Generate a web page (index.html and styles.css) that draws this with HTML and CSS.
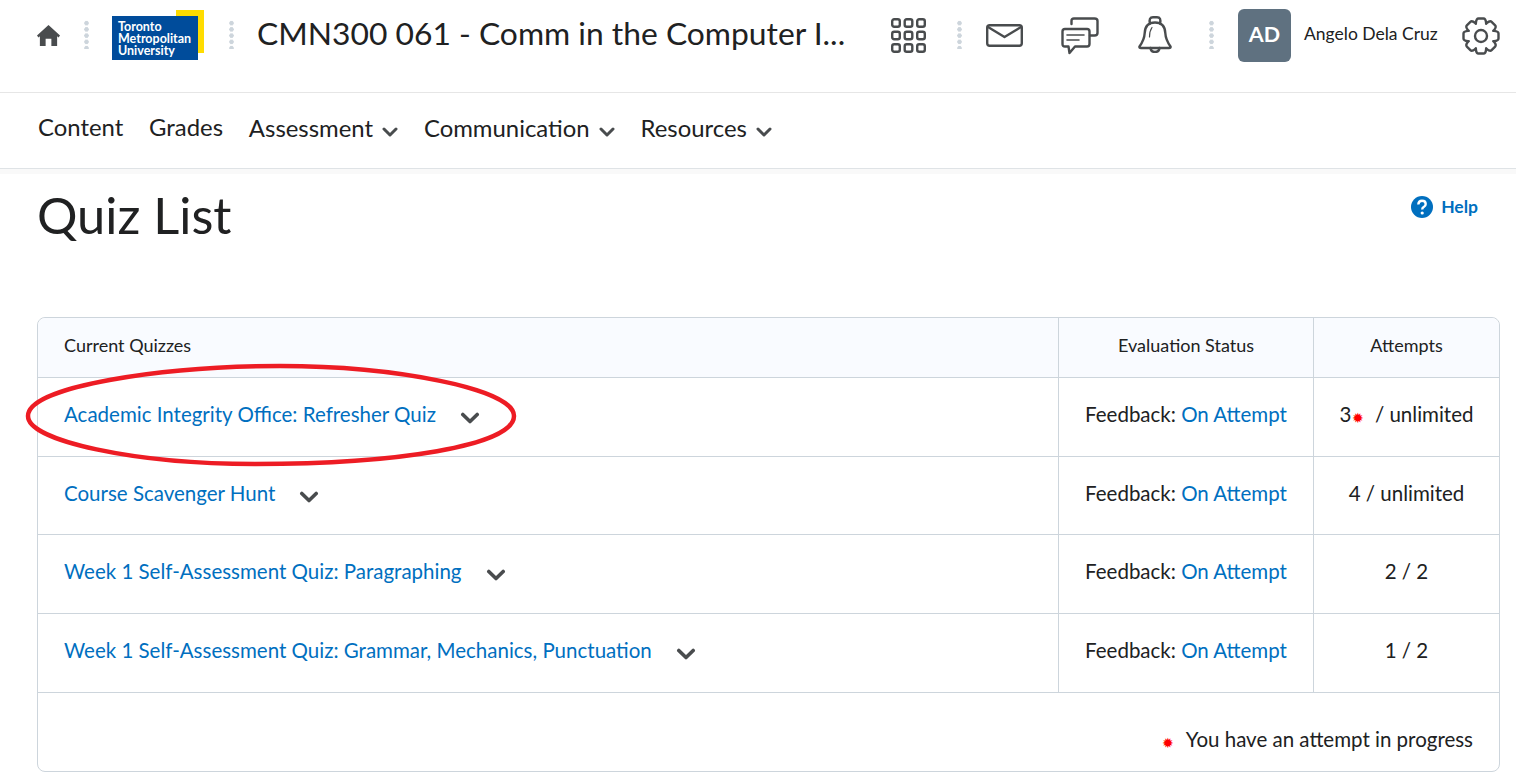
FILE: index.html
```html
<!DOCTYPE html>
<html lang="en">
<head>
    <meta charset="UTF-8">
    <title>Quiz List</title>
    <link rel="stylesheet" href="styles.css">
</head>
<body>
    <header class="topbar">
        <svg class="ico-home" viewBox="0 0 24 24"><path d="M12 1 L24 12 L22.500 14 L21 12.800 V23 H15 V15.500 H9 V23 H3 V12.800 L1.500 14 L0 12 Z" fill="#494c4e"/></svg>
        <span class="dots dots-a"></span>
        <div class="logo">
            <span class="logo-yellow"></span>
            <div class="logo-blue">Toronto<br>Metropolitan<br>University</div>
        </div>
        <span class="dots dots-b"></span>
        <div class="course">CMN300 061 - Comm in the Computer I...</div>
        <svg class="ico-grid" viewBox="0 0 35 35" fill="none" stroke="#494c4e" stroke-width="2.4">
            <rect x="1.2" y="1.2" width="7.6" height="7.6" rx="2"/><rect x="13.7" y="1.2" width="7.6" height="7.6" rx="2"/><rect x="26.2" y="1.2" width="7.6" height="7.6" rx="2"/>
            <rect x="1.2" y="13.7" width="7.6" height="7.6" rx="2"/><rect x="13.7" y="13.7" width="7.6" height="7.6" rx="2"/><rect x="26.2" y="13.7" width="7.6" height="7.6" rx="2"/>
            <rect x="1.2" y="26.2" width="7.6" height="7.6" rx="2"/><rect x="13.7" y="26.2" width="7.6" height="7.6" rx="2"/><rect x="26.2" y="26.2" width="7.6" height="7.6" rx="2"/>
        </svg>
        <span class="dots dots-c"></span>
        <svg class="ico-mail" viewBox="0 0 37 23" fill="none" stroke="#494c4e" stroke-width="2.4" stroke-linejoin="round" stroke-linecap="round">
            <rect x="1.2" y="1.2" width="34.6" height="20.6" rx="2.5"/><path d="M2 3 L18.5 13 L35 3"/>
        </svg>
        <svg class="ico-chat" viewBox="0 0 38 38" fill="none" stroke="#494c4e" stroke-width="2.4" stroke-linejoin="round" stroke-linecap="round">
            <path d="M10.5 7 V4 Q10.500 1.500 13 1.500 H33.500 Q36.500 1.500 36.500 4 V16 Q36.500 18.500 33.500 18.500 H29"/>
            <path d="M4 12 H26 Q28.500 12 28.500 14.500 V27 Q28.500 29.500 26 29.500 H14 L8.500 36 L7.500 29.500 H4 Q1.500 29.500 1.500 27 V14.500 Q1.500 12 4 12 Z"/>
            <path d="M6 18 H23 M6 23 H18" stroke-width="1.600"/>
        </svg>
        <svg class="ico-bell" viewBox="0 0 34 37" fill="none" stroke="#494c4e" stroke-width="2.4" stroke-linejoin="round" stroke-linecap="round">
            <path d="M12 7.500 Q10.500 1.300 15 1.300 H19 Q23.500 1.300 22 7.500"/>
            <path d="M17 6.500 C9.500 6.500 7 11 6.700 17 C6.400 23 4 27 1.500 30.500 Q1 32 3 32 H31 Q33 32 32.500 30.500 C30 27 27.600 23 27.300 17 C27 11 24.500 6.500 17 6.500 Z"/>
            <path d="M12.500 32 Q13 36 17 36 Q21 36 21.500 32"/>
            <path d="M11.500 21 Q11.500 15 14 11.500" stroke-width="1.200"/>
        </svg>
        <span class="dots dots-d"></span>
        <div class="avatar">AD</div>
        <div class="username">Angelo Dela Cruz</div>
        <svg class="ico-gear" viewBox="0 0 38 38" fill="none" stroke="#494c4e" stroke-width="2.400" stroke-linecap="round">
            <defs>
                <path id="cog" d="M13.830 6.530 C14 5 14 1.500 16.500 1.500 H21.500 C24 1.500 24 5 24.170 6.530"/>
            </defs>
            <circle cx="19" cy="19" r="6"/>
            <use href="#cog"/>
            <use href="#cog" transform="rotate(45 19 19)"/>
            <use href="#cog" transform="rotate(90 19 19)"/>
            <use href="#cog" transform="rotate(135 19 19)"/>
            <use href="#cog" transform="rotate(180 19 19)"/>
            <use href="#cog" transform="rotate(225 19 19)"/>
            <use href="#cog" transform="rotate(270 19 19)"/>
            <use href="#cog" transform="rotate(315 19 19)"/>
        </svg>
    </header>

    <nav class="navbar">
        <a class="nav-item">Content</a>
        <a class="nav-item">Grades</a>
        <a class="nav-item nav-drop">Assessment <svg class="chev" viewBox="0 0 16 10"><path d="M2 2 L8 8 L14 2"/></svg></a>
        <a class="nav-item nav-drop">Communication <svg class="chev" viewBox="0 0 16 10"><path d="M2 2 L8 8 L14 2"/></svg></a>
        <a class="nav-item nav-drop">Resources <svg class="chev" viewBox="0 0 16 10"><path d="M2 2 L8 8 L14 2"/></svg></a>
    </nav>
    <div class="band"></div>

    <main class="content">
        <div class="title-row">
            <h1>Quiz List</h1>
            <a class="help">
                <svg class="ico-help" viewBox="0 0 22 22"><circle cx="11" cy="11" r="11" fill="#006fbf"/><path d="M7.300 8.500 Q7.500 4.800 11 4.800 Q14.700 4.800 14.700 8 Q14.700 9.800 13 10.800 Q11.200 11.800 11.200 13.500" fill="none" stroke="#fff" stroke-width="2.400"/><circle cx="11.200" cy="17" r="1.600" fill="#fff"/></svg>
                Help
            </a>
        </div>

        <div class="quiz-wrap">
            <table class="quiz-table">
                <thead>
                    <tr>
                        <th class="col-name">Current Quizzes</th>
                        <th class="col-eval">Evaluation Status</th>
                        <th class="col-att">Attempts</th>
                    </tr>
                </thead>
                <tbody>
                    <tr>
                        <td class="col-name"><a class="link">Academic Integrity Office: Refresher Quiz</a><svg class="chev chev-row" viewBox="0 0 16 10"><path d="M2 2 L8 8 L14 2"/></svg></td>
                        <td class="col-eval">Feedback: <a class="link">On Attempt</a></td>
                        <td class="col-att">3<span class="star">&#10041;</span> &nbsp;/ unlimited</td>
                    </tr>
                    <tr>
                        <td class="col-name"><a class="link">Course Scavenger Hunt</a><svg class="chev chev-row" viewBox="0 0 16 10"><path d="M2 2 L8 8 L14 2"/></svg></td>
                        <td class="col-eval">Feedback: <a class="link">On Attempt</a></td>
                        <td class="col-att">4 / unlimited</td>
                    </tr>
                    <tr>
                        <td class="col-name"><a class="link">Week 1 Self-Assessment Quiz: Paragraphing</a><svg class="chev chev-row" viewBox="0 0 16 10"><path d="M2 2 L8 8 L14 2"/></svg></td>
                        <td class="col-eval">Feedback: <a class="link">On Attempt</a></td>
                        <td class="col-att">2 / 2</td>
                    </tr>
                    <tr>
                        <td class="col-name"><a class="link">Week 1 Self-Assessment Quiz: Grammar, Mechanics, Punctuation</a><svg class="chev chev-row" viewBox="0 0 16 10"><path d="M2 2 L8 8 L14 2"/></svg></td>
                        <td class="col-eval">Feedback: <a class="link">On Attempt</a></td>
                        <td class="col-att">1 / 2</td>
                    </tr>
                </tbody>
                <tfoot>
                    <tr>
                        <td colspan="3" class="foot"><span class="star star-foot">&#10041;</span>You have an attempt in progress</td>
                    </tr>
                </tfoot>
            </table>
            <!-- hand drawn marker over first quiz -->
            <svg class="marker" viewBox="0 0 492 106"><path d="M255 5 C140 5 3 25 3 55 C3 80 110 103 230 103 C370 103 489 85 489 55 C489 28 370 5 255 5 Z"/></svg>
        </div>
    </main>
</body>
</html>
```

FILE: styles.css
```css
* {
    margin: 0;
    padding: 0;
    box-sizing: border-box;
}

html, body {
    height: 784px;
    overflow: hidden;
}

body {
    background-color: #fff;
    color: #202122;
    font-family: Lato, "Open Sans", sans-serif;
}

.topbar {
    height: 93px;
    border-bottom: 1px solid #e6e6e6;
    display: flex;
    align-items: flex-start;
    padding-left: 37px;
}

.ico-home {
    width: 23px;
    height: 23px;
    margin-top: 24px;
}

.dots {
    width: 5px;
    height: 29px;
    margin-top: 20px;
    background-image: radial-gradient(circle, #cdd5dc 2px, transparent 2.4px);
    background-size: 5px 6.250px;
}

.dots-a { margin-left: 24px; }
.dots-b { margin-left: 25px; }
.dots-c { margin-left: 31px; }
.dots-d { margin-left: 37px; }

.logo {
    position: relative;
    width: 92px;
    height: 50px;
    margin-left: 23px;
    margin-top: 10px;
}

.logo-yellow {
    position: absolute;
    right: 0;
    top: 0;
    width: 28px;
    height: 43px;
    background-color: #ffdc00;
}

.logo-blue {
    position: absolute;
    left: 0;
    bottom: 0;
    width: 86px;
    height: 44px;
    padding: 5px 0 0 6px;
    background-color: #004c9b;
    color: #fff;
    font-size: 12.500px;
    font-weight: 700;
    line-height: 12px;
    white-space: nowrap;
}

.course {
    width: 600px;
    margin-left: 23px;
    margin-top: 13px;
    font-size: 31.800px;
    line-height: 40px;
    white-space: nowrap;
}

.ico-grid {
    width: 35px;
    height: 35px;
    margin-left: 34px;
    margin-top: 18px;
}

.ico-mail {
    width: 37px;
    height: 23px;
    margin-left: 24px;
    margin-top: 24px;
}

.ico-chat {
    width: 38px;
    height: 38px;
    margin-left: 38px;
    margin-top: 17px;
}

.ico-bell {
    width: 34px;
    height: 37px;
    margin-left: 39px;
    margin-top: 16px;
}

.avatar {
    width: 53px;
    height: 53px;
    margin-left: 24px;
    margin-top: 9px;
    border-radius: 6px;
    background-color: #5f7180;
    color: #fff;
    font-size: 21.500px;
    font-weight: 700;
    line-height: 50px;
    text-align: center;
}

.username {
    margin-left: 13px;
    margin-top: 23px;
    font-size: 17.500px;
    line-height: 22px;
    white-space: nowrap;
}

.ico-gear {
    width: 38px;
    height: 38px;
    margin-left: 24px;
    margin-top: 17px;
}

.navbar {
    height: 76px;
    border-bottom: 1px solid #dfe3e6;
    display: flex;
    align-items: center;
    gap: 25.800px;
    padding: 0 0 8px 38px;
}

.nav-item {
    font-size: 23.900px;
    line-height: 30px;
    white-space: nowrap;
}

.nav-drop {
    margin-top: 2px;
}

.chev {
    width: 16px;
    height: 10px;
    margin-left: 3px;
    fill: none;
    stroke: #494c4e;
    stroke-width: 3;
    stroke-linecap: round;
    stroke-linejoin: round;
}

.band {
    height: 5px;
    background-color: #f9f9f9;
}

.content {
    padding: 0 16px 0 37px;
}

.title-row {
    height: 143px;
    display: flex;
    align-items: flex-start;
    justify-content: space-between;
}

h1 {
    margin-top: 8px;
    font-size: 50.600px;
    font-weight: 400;
    line-height: 66px;
}

.help {
    display: flex;
    align-items: center;
    gap: 8px;
    margin-top: 21px;
    margin-right: 22px;
    color: #006fbf;
    font-size: 17.500px;
    font-weight: 700;
    line-height: 24px;
}

.ico-help {
    width: 22px;
    height: 22px;
}

.quiz-wrap {
    position: relative;
}

.quiz-table {
    width: 1463px;
    table-layout: fixed;
    border-collapse: separate;
    border-spacing: 0;
    border: 1px solid #cdd5dc;
    border-radius: 8px;
    font-size: 20.500px;
}

.quiz-table th {
    height: 60px;
    padding-bottom: 6px;
    background-color: #f9fbff;
    border-bottom: 1px solid #cdd5dc;
    font-size: 18px;
    font-weight: 400;
    text-align: center;
}

.quiz-table th:first-child { border-top-left-radius: 8px; }
.quiz-table th:last-child { border-top-right-radius: 8px; }

.quiz-table td {
    height: 79px;
    padding-bottom: 6px;
    border-bottom: 1px solid #cdd5dc;
    text-align: center;
    white-space: nowrap;
}

.quiz-table tbody tr:nth-child(2) td {
    height: 78px;
}

.quiz-table .col-name {
    width: 1020px;
    padding-left: 26px;
    text-align: left;
}

.col-eval {
    width: 255px;
    border-left: 1px solid #cdd5dc;
}

.col-att {
    border-left: 1px solid #cdd5dc;
}

.link {
    color: #006fbf;
}

.chev-row {
    width: 20px;
    height: 12px;
    margin-left: 24px;
    vertical-align: -2px;
}

.star {
    color: #f00;
    font-size: 13.500px;
    line-height: 0;
    margin-left: 1px;
    vertical-align: -1px;
}

.quiz-table .foot {
    height: 78px;
    padding: 14px 26px 0 0;
    border-bottom: none;
    text-align: right;
}

.star-foot {
    margin-right: 12px;
}

.marker {
    position: absolute;
    left: -12px;
    top: 44px;
    width: 492px;
    height: 106px;
    fill: none;
    stroke: #ed1c24;
    stroke-width: 4.500;
}
```
